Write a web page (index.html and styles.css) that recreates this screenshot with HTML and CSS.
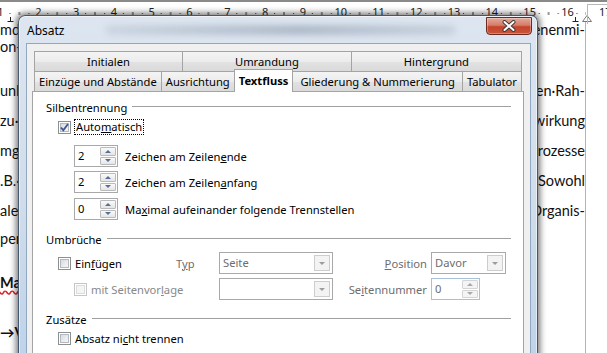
FILE: index.html
```html
<!DOCTYPE html>
<html>

<head>
    <meta charset="UTF-8">
    <link rel="stylesheet" href="styles.css">
</head>

<body>
    <div class="screen">
        <div class="ruler">
            <svg class="ruler-ticks" width="607" height="20" viewBox="0 0 607 20">
                <defs>
                    <pattern id="cm" x="0.5" y="0" width="37.8" height="20" patternUnits="userSpaceOnUse">
                        <rect x="9" y="11" width="1" height="1" fill="#333" />
                        <rect x="18.4" y="10" width="1" height="3" fill="#333" />
                        <rect x="28" y="11" width="1" height="1" fill="#333" />
                    </pattern>
                </defs>
                <rect x="0" y="0" width="586" height="20" fill="url(#cm)" />
                <path d="M7.5 19.5 H13.5 M10.5 15 V19.5" stroke="#222" fill="none" />
                <path d="M572.5 19.5 H578.5 M575.5 15 V19.5" stroke="#222" fill="none" />
                <path d="M582.5 19.5 L587 13.5 L591.5 19.5 Z" stroke="#777" fill="#fff" />
            </svg>
            <div class="ruler-nums">
                <span><b>1</b></span><span><b>2</b></span><span><b>3</b></span><span><b>4</b></span>
                <span><b>5</b></span><span><b>6</b></span><span><b>7</b></span><span><b>8</b></span>
                <span><b>9</b></span><span><b>10</b></span><span><b>11</b></span><span><b>12</b></span>
                <span><b>13</b></span><span><b>14</b></span><span><b>15</b></span><span><b>16</b></span>
                <span><b>17</b></span>
            </div>
            <div class="ruler-end"></div>
        </div>

        <div class="page">
            <div class="line first"><span>md-</span><span>enenmi-</span></div>
            <div class="line tight"><span>on-</span><span></span></div>
            <div class="line wide"><span>unk</span><span>en·Rah-</span></div>
            <div class="line"><span>zu·</span><span>wirkung</span></div>
            <div class="line"><span>mg</span><span>rozesse</span></div>
            <div class="line"><span>.B.·</span><span>Sowohl</span></div>
            <div class="line"><span>ale</span><span>Organis-</span></div>
            <div class="line close"><span>pen</span><span></span></div>
            <div class="line far"><span class="strong wavy">Ma</span><span></span></div>
            <div class="line farther"><span class="strong">→V</span><span></span></div>
        </div>

        <div class="dialog">
            <div class="titlebar">
                <span class="title">Absatz</span>
                <span class="glass-blur"></span>
                <span class="close-btn">
                    <svg width="16" height="12" viewBox="0 0 16 12">
                        <path d="M3.5 2 L12.5 10 M12.5 2 L3.5 10" stroke="#3b3b3b" stroke-width="4" stroke-linecap="round" />
                        <path d="M3.5 2 L12.5 10 M12.5 2 L3.5 10" stroke="#fff" stroke-width="2" stroke-linecap="round" />
                    </svg>
                </span>
            </div>

            <div class="client">
                <div class="tabrow">
                    <div class="tab">Initialen</div>
                    <div class="tab">Umrandung</div>
                    <div class="tab">Hintergrund</div>
                </div>
                <div class="tabrow front">
                    <div class="tab">Einzüge und Abstände</div>
                    <div class="tab">Ausrichtung</div>
                    <div class="tab active">Textfluss</div>
                    <div class="tab wide-tab">Gliederung &amp; Nummerierung</div>
                    <div class="tab">Tabulator</div>
                </div>

                <div class="panel">
                    <div class="group-head">Silbentrennung</div>
                    <div class="check-row auto-row">
                        <span class="check">
                            <svg width="11" height="11" viewBox="0 0 11 11">
                                <path d="M2 5.5 L4.3 8.2 L9 2" stroke="#3d5890" stroke-width="1.8" fill="none" />
                            </svg>
                        </span>
                        <span class="focus">Auto<u>m</u>atisch</span>
                    </div>
                    <div class="spin-row first">
                        <div class="spin"><span class="spin-val">2</span><span class="spin-btns"><i class="up"></i><i class="down"></i></span></div>
                        <span>Zeichen am Zeilen<u>e</u>nde</span>
                    </div>
                    <div class="spin-row">
                        <div class="spin"><span class="spin-val">2</span><span class="spin-btns"><i class="up"></i><i class="down"></i></span></div>
                        <span>Zeichen am Zeilen<u>a</u>nfang</span>
                    </div>
                    <div class="spin-row last">
                        <div class="spin"><span class="spin-val">0</span><span class="spin-btns"><i class="up"></i><i class="down"></i></span></div>
                        <span>Ma<u>x</u>imal aufeinander folgende Trennstellen</span>
                    </div>

                    <div class="group-head section">Umbrüche</div>
                    <div class="break-grid">
                        <div class="check-row">
                            <span class="check"></span>
                            <span>Ein<u>f</u>ügen</span>
                        </div>
                        <span class="muted">T<u>y</u>p</span>
                        <div class="combo"><span class="muted">Seite</span><span class="combo-btn"></span></div>
                        <span class="muted right"><u>P</u>osition</span>
                        <div class="combo short"><span class="muted">Davor</span><span class="combo-btn"></span></div>

                        <div class="check-row sub">
                            <span class="check off"></span>
                            <span class="faint">mit Seitenvor<u>l</u>age</span>
                        </div>
                        <span></span>
                        <div class="combo"><span></span><span class="combo-btn"></span></div>
                        <span class="muted right">Se<u>i</u>tennummer</span>
                        <div class="spin spin-off"><span class="spin-val muted">0</span><span class="spin-btns"><i class="up"></i><i class="down"></i></span></div>
                    </div>

                    <div class="group-head section">Zusätze</div>
                    <div class="check-row extra-row">
                        <span class="check"></span>
                        <span>Absatz ni<u>c</u>ht trennen</span>
                    </div>
                </div>
            </div>
        </div>
    </div>
</body>

</html>
```

FILE: styles.css
```css
* {
    box-sizing: border-box;
}

body {
    margin: 0;
    background: #fff;
    font-family: "Noto Sans", sans-serif;
}

.screen {
    position: relative;
    width: 607px;
    height: 353px;
    overflow: hidden;
    background: #fff;
}

/* ruler on top of the document */
.ruler {
    position: relative;
    height: 22px;
    border-top: 2px solid #8a8a8a;
    background: #fff;
}

.ruler-ticks {
    position: absolute;
    left: 0;
    top: 0;
}

.ruler-nums {
    position: relative;
    display: flex;
    margin-left: -18.4px;
    font-size: 11px;
    line-height: 20px;
    color: #222;
}

.ruler-nums span {
    flex: 0 0 37.8px;
    text-align: center;
}

.ruler-nums b {
    font-weight: normal;
    background: #fff;
    padding: 0 1px;
}

.ruler-end {
    position: absolute;
    left: 587px;
    top: 2px;
    width: 30px;
    height: 20px;
    border-left: 1px solid #b8b8b8;
    border-top: 1px solid #b8b8b8;
}

/* document page behind the dialog */
.page {
    width: 586px;
    height: 331px;
    border-right: 1px solid #b4b4b4;
    font-family: Lato, sans-serif;
    font-size: 14.5px;
    color: #111;
}

.line {
    display: flex;
    justify-content: space-between;
    height: 15px;
    line-height: 15px;
    white-space: nowrap;
    margin-top: 15px;
}

.line.first {
    margin-top: 0;
}

.line.tight {
    margin-top: 2px;
}

.line.wide {
    margin-top: 29px;
}

.line.close {
    margin-top: 13px;
}

.line.far {
    margin-top: 29px;
}

.line.farther {
    margin-top: 35px;
}

.strong {
    font-weight: bold;
}

.wavy {
    text-decoration: underline wavy #e02020;
    text-decoration-skip-ink: none;
    text-underline-offset: 2px;
}

/* the dialog window */
.dialog {
    position: absolute;
    left: 18px;
    top: 15px;
    width: 520px;
    height: 360px;
    display: flex;
    flex-direction: column;
    border: 1px solid rgba(30, 45, 70, 0.75);
    border-bottom: none;
    border-radius: 7px 7px 0 0;
    background: linear-gradient(180deg, #dde6f0 0%, #cfdcea 55%, #bcd2ea 100%);
    box-shadow: 0 0 6px 2px rgba(0, 0, 0, 0.55), inset 0 0 0 1px rgba(255, 255, 255, 0.55);
}

.titlebar {
    display: flex;
    align-items: flex-start;
    height: 27px;
    padding-left: 8px;
    overflow: hidden;
}

.title {
    font-size: 12px;
    line-height: 30px;
    color: #000;
}

/* blurred document seen through the glass */
.glass-blur {
    flex: 1;
    height: 10px;
    margin: 9px 30px 0 40px;
    border-radius: 5px;
    background: linear-gradient(90deg, rgba(90, 105, 130, 0.12), rgba(70, 85, 110, 0.3) 55%, rgba(90, 105, 130, 0.15));
    filter: blur(3px);
}

.close-btn {
    display: flex;
    align-items: center;
    justify-content: center;
    width: 46px;
    height: 18px;
    margin: 1px 5px 0 0;
    border: 1px solid #6b2b20;
    border-radius: 0 0 4px 4px;
    background: linear-gradient(180deg, #e3aa9c 0%, #d67c68 45%, #c5432b 55%, #c8553b 100%);
    box-shadow: inset 0 0 0 1px rgba(255, 255, 255, 0.3);
}

.client {
    flex: 1;
    margin: 0 6px 0 7px;
    padding: 7px 6px 0 5px;
    border: 1px solid #92a7c0;
    border-bottom: none;
    background: #f0f0f0;
    font-size: 11.2px;
    color: #000;
}

/* tabs */
.tabrow {
    display: flex;
    align-items: flex-start;
    margin: 0 2px;
}

.tab {
    flex: 1 1 auto;
    height: 20px;
    margin-left: -1px;
    padding: 0 3px;
    border: 1px solid #a4a4a4;
    border-bottom: none;
    background: linear-gradient(180deg, #f4f4f4 0%, #ececec 50%, #e2e2e2 51%, #dadada 100%);
    text-align: center;
    line-height: 19px;
    white-space: nowrap;
}

.tab:first-child {
    margin-left: 0;
}

.tab.wide-tab {
    padding: 0 6px;
}

.tab.active {
    position: relative;
    z-index: 1;
    height: 23px;
    margin-top: -2px;
    margin-bottom: -1px;
    background: #fff;
    font-weight: bold;
    line-height: 22px;
}

.panel {
    height: 280px;
    padding: 7px 12px 0 13px;
    border: 1px solid #a4a4a4;
    border-bottom: none;
    background: #fff;
}

.group-head {
    display: flex;
    align-items: center;
    gap: 5px;
    height: 16px;
}

.group-head::after {
    content: "";
    flex: 1;
    margin-top: -1px;
    border-top: 1px solid #a0a0a0;
}

.group-head.section {
    margin-top: 11px;
}

/* checkboxes */
.check-row {
    display: flex;
    align-items: center;
    gap: 4px;
    height: 16px;
    white-space: nowrap;
}

.auto-row {
    margin-top: 4px;
    padding-left: 12px;
    gap: 3px;
}

.extra-row {
    margin-top: 3px;
    padding-left: 12px;
}

.check {
    display: flex;
    align-items: center;
    justify-content: center;
    flex: none;
    width: 13px;
    height: 13px;
    border: 1px solid #8e8f8f;
    background: linear-gradient(135deg, #cfd3d8 0%, #eceef0 60%, #f8f8f8 100%);
    box-shadow: inset 0 0 0 1px #fff, inset 0 0 0 2px #b4b9bf;
}

.check.off {
    border-color: #c6c6c6;
    background: #f4f4f4;
    box-shadow: inset 0 0 0 1px #fff, inset 0 0 0 2px #dcdcdc;
}

.focus {
    padding: 0 1px;
    border: 1px dotted #000;
    line-height: 14px;
}

/* spin fields */
.spin-row {
    display: flex;
    align-items: center;
    gap: 7px;
    height: 22px;
    margin-top: 4px;
    padding-left: 28px;
}

.spin-row.first {
    margin-top: 10px;
}

.spin-row.last {
    margin-top: 5px;
}

.spin {
    display: flex;
    justify-content: space-between;
    width: 44px;
    height: 22px;
    padding: 1px;
    border: 1px solid #a9a9a9;
    background: #fff;
}

.spin-val {
    padding-left: 2px;
    line-height: 18px;
}

.spin-btns {
    display: flex;
    flex-direction: column;
    gap: 1px;
    width: 16px;
}

.spin-btns i {
    flex: 1;
    display: flex;
    align-items: center;
    justify-content: center;
    border: 1px solid #bababa;
    border-radius: 1px;
    background: linear-gradient(180deg, #fafafa, #e5e5e5);
}

.spin-btns i::after {
    content: "";
    border-left: 3px solid transparent;
    border-right: 3px solid transparent;
}

.spin-btns .up::after {
    border-bottom: 3px solid #556f96;
}

.spin-btns .down::after {
    border-top: 3px solid #556f96;
}

.spin-off {
    width: 49px;
    border-color: #a9c0da;
}

.spin-off .spin-btns i {
    border-color: #d4d4d4;
    background: #f4f4f4;
}

.spin-off .spin-btns .up::after {
    border-bottom-color: #a8a8a8;
}

.spin-off .spin-btns .down::after {
    border-top-color: #a8a8a8;
}

/* page break block */
.break-grid {
    display: grid;
    grid-template-columns: 118px 43px 114px 98px auto;
    grid-auto-rows: 22px;
    row-gap: 4px;
    align-items: center;
    margin-top: 5px;
    padding-left: 12px;
}

.check-row.sub {
    padding-left: 16px;
}

.muted {
    color: #6d6d6d;
}

.faint {
    color: #888;
}

.right {
    padding-right: 4px;
    text-align: right;
    white-space: nowrap;
}

.combo {
    display: flex;
    justify-content: space-between;
    align-items: stretch;
    height: 22px;
    padding: 2px 2px 2px 3px;
    border: 1px solid #a9a9a9;
    background: #fff;
    line-height: 16px;
}

.combo.short {
    width: 75px;
}

.combo-btn {
    display: flex;
    align-items: center;
    justify-content: center;
    width: 16px;
    border: 1px solid #cdcdcd;
    background: #f3f3f3;
}

.combo-btn::after {
    content: "";
    border-left: 3px solid transparent;
    border-right: 3px solid transparent;
    border-top: 3px solid #9c9c9c;
}
```
